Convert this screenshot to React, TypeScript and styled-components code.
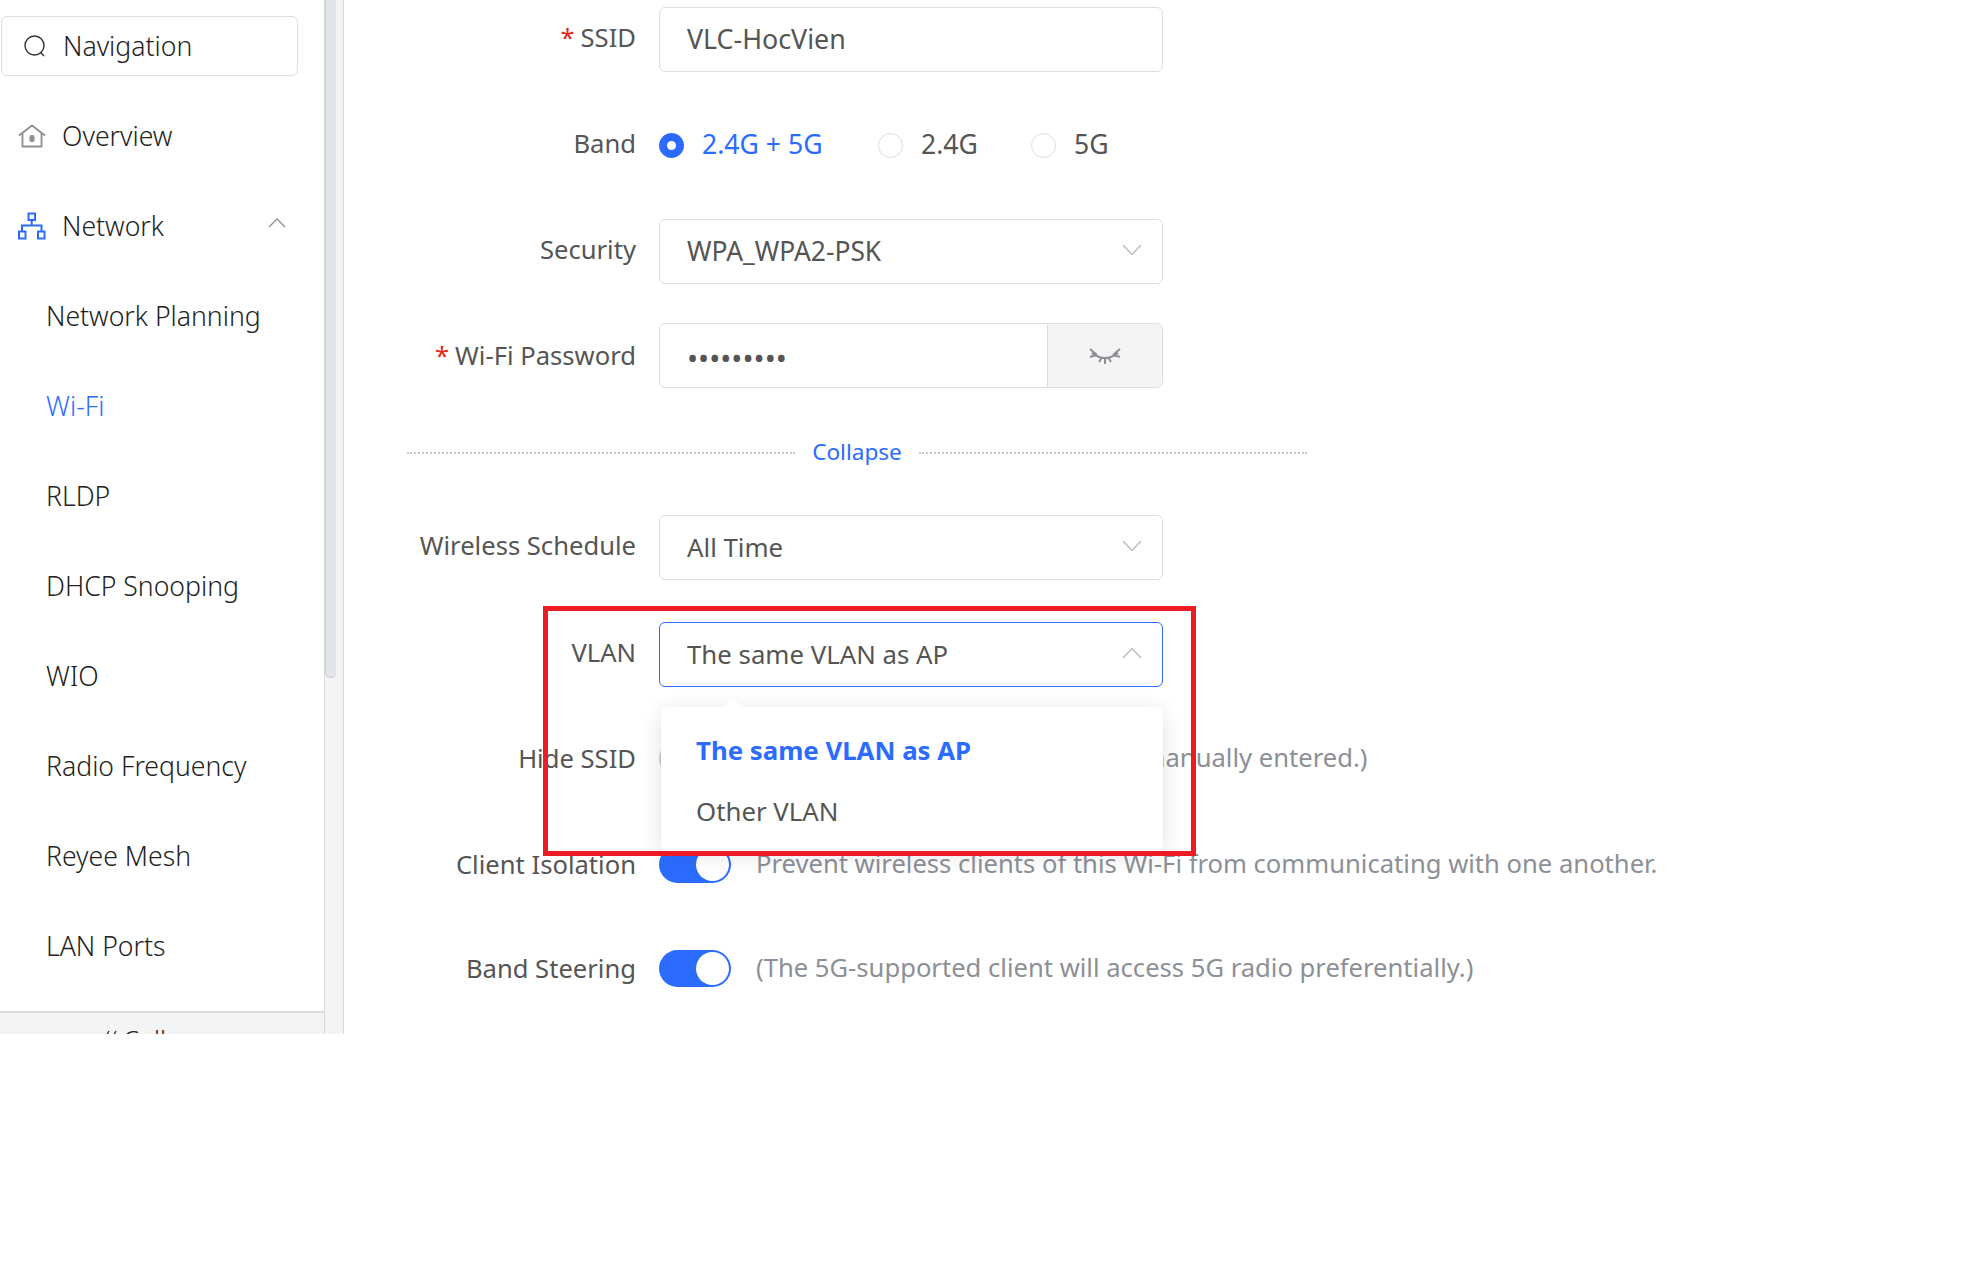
import styled, { createGlobalStyle } from 'styled-components';

const GlobalStyle = createGlobalStyle`
  html, body {
    margin: 0;
    padding: 0;
    background: #fff;
  }
  * {
    box-sizing: border-box;
  }
  body {
    font-family: "Noto Sans", "Open Sans", sans-serif;
  }
`;

const navItems = [
  'Network Planning',
  'Wi-Fi',
  'RLDP',
  'DHCP Snooping',
  'WIO',
  'Radio Frequency',
  'Reyee Mesh',
  'LAN Ports',
];

const Chevron = ({ up, color = '#b9bbbf' }: { up?: boolean; color?: string }) => (
  <svg width="20" height="12" viewBox="0 0 20 12" fill="none">
    <path d={up ? 'M1 11 L10 1.5 L19 11' : 'M1 1 L10 10.5 L19 1'} stroke={color} strokeWidth="1.3" />
  </svg>
);

const App = () => {
  return (
    <>
      <GlobalStyle />
      <Page>
        <Sidebar>
          <NavArea>
            <SearchBox>
              <svg width="24" height="24" viewBox="0 0 24 24" fill="none">
                <circle cx="11.5" cy="11.5" r="9.5" stroke="#333" strokeWidth="1.4" />
                <path d="M17.5 18.5 L21 22" stroke="#333" strokeWidth="1.4" />
              </svg>
              <span>Navigation</span>
            </SearchBox>
            <NavRow>
              <IconSlot>
                <svg width="28" height="24" viewBox="0 0 28 24" fill="none">
                  <path d="M1 11.5 L14 1.5 L27 11.5" stroke="#8f8f8f" strokeWidth="1.8" />
                  <path d="M4.5 9.5 V22.5 H23.5 V9.5" stroke="#8f8f8f" strokeWidth="1.8" />
                  <rect x="11.5" y="11" width="5" height="7" rx="2" fill="#8f8f8f" />
                </svg>
              </IconSlot>
              Overview
            </NavRow>
            <NavRow>
              <IconSlot>
                <svg width="28" height="28" viewBox="0 0 28 28" fill="none">
                  <rect x="10.5" y="1.5" width="6.5" height="6.5" stroke="#2b6cff" strokeWidth="2" />
                  <path d="M13.7 8 V13.5 M4 19 V13.5 H23.5 V19" stroke="#2b6cff" strokeWidth="2" />
                  <rect x="1" y="19.5" width="6.5" height="7" stroke="#2b6cff" strokeWidth="2" />
                  <rect x="20" y="19.5" width="6.5" height="7" stroke="#2b6cff" strokeWidth="2" />
                </svg>
              </IconSlot>
              Network
              <NavChevron>
                <svg width="18" height="10" viewBox="0 0 18 10" fill="none">
                  <path d="M1 9 L9 1 L17 9" stroke="#8f8f8f" strokeWidth="1.3" />
                </svg>
              </NavChevron>
            </NavRow>
            {navItems.map((item) => (
              <SubRow key={item} $active={item === 'Wi-Fi'}>
                {item}
              </SubRow>
            ))}
          </NavArea>
          <SideFooter>
            <svg width="14" height="20" viewBox="0 0 14 20" fill="none">
              <path d="M6 1 L1 10 L6 19 M13 1 L8 10 L13 19" stroke="#333" strokeWidth="1.4" />
            </svg>
            <span>Collapse</span>
          </SideFooter>
        </Sidebar>
        <ScrollTrack>
          <ScrollThumb />
        </ScrollTrack>
        <Content>
          <FormRow>
            <Label>
              <Req>*</Req>SSID
            </Label>
            <Field>
              <FieldText $size={26.8}>VLC-HocVien</FieldText>
            </Field>
          </FormRow>
          <FormRow>
            <Label>Band</Label>
            <RadioGroup>
              <RadioItem $active $width={219}>
                <RadioDot $active />
                2.4G + 5G
              </RadioItem>
              <RadioItem $width={153}>
                <RadioDot />
                2.4G
              </RadioItem>
              <RadioItem>
                <RadioDot />
                5G
              </RadioItem>
            </RadioGroup>
          </FormRow>
          <FormRow>
            <Label>Security</Label>
            <Field>
              <FieldText $size={26.4}>WPA_WPA2-PSK</FieldText>
              <Chevron />
            </Field>
          </FormRow>
          <FormRow $top={39}>
            <Label $flat>
              <Req>*</Req>Wi-Fi Password
            </Label>
            <Field>
              <PasswordDots>•••••••••</PasswordDots>
              <EyeAddon>
                <svg width="32" height="18" viewBox="0 0 32 18" fill="none">
                  <path
                    d="M3 6 Q16 16 29 6 M1 2 L8 8 M31 2 L24 8 M1 10 L7 8 M31 10 L25 8 M10 15 L12.5 11 M22 15 L19.5 11 M16 17 V12"
                    stroke="#8c8f96"
                    strokeWidth="2"
                  />
                </svg>
              </EyeAddon>
            </Field>
          </FormRow>
          <Divider>
            <DividerLine />
            <DividerText>Collapse</DividerText>
            <DividerLine />
          </Divider>
          <FormRow $top={31}>
            <Label>Wireless Schedule</Label>
            <Field>
              <FieldText>All Time</FieldText>
              <Chevron />
            </Field>
          </FormRow>
          <FormRow $top={42}>
            <Label>VLAN</Label>
            <Field $focused>
              <FieldText>The same VLAN as AP</FieldText>
              <Chevron up />
            </Field>
            <Dropdown>
              <DropItem $active>The same VLAN as AP</DropItem>
              <DropItem>Other VLAN</DropItem>
            </Dropdown>
          </FormRow>
          <FormRow $top={39}>
            <Label $flat>Hide SSID</Label>
            <Toggle />
            <Hint $gap={16}>(The SSID is hidden and must be manually entered.)</Hint>
          </FormRow>
          <FormRow>
            <Label $flat>Client Isolation</Label>
            <Toggle $on />
            <Hint>Prevent wireless clients of this Wi-Fi from communicating with one another.</Hint>
          </FormRow>
          <FormRow $top={39}>
            <Label $flat>Band Steering</Label>
            <Toggle $on />
            <Hint>(The 5G-supported client will access 5G radio preferentially.)</Hint>
          </FormRow>
        </Content>
        <RedBox />
      </Page>
    </>
  );
};

const Page = styled.div`
  position: relative;
  display: flex;
  height: 1034px;
  overflow: hidden;
`;

const Sidebar = styled.aside`
  width: 325px;
  flex: none;
  display: flex;
  flex-direction: column;
  border-right: 1px solid #d9d9d9;
`;

const NavArea = styled.nav`
  height: 1011px;
  flex: none;
  padding-top: 16px;
`;

const SearchBox = styled.div`
  width: 297px;
  height: 60px;
  margin-left: 1px;
  padding-left: 21px;
  display: flex;
  align-items: center;
  gap: 16px;
  border: 1px solid #dedede;
  border-radius: 6px;
  font-size: 26.6px;
  font-weight: 300;
  color: #222;
`;

const NavRow = styled.div`
  height: 90px;
  padding-left: 18px;
  display: flex;
  align-items: center;
  font-size: 26.6px;
  font-weight: 300;
  color: #222;
  &:nth-child(2) {
    margin-top: 15px;
  }
`;

const IconSlot = styled.span`
  width: 44px;
  display: flex;
  align-items: center;
`;

const NavChevron = styled.span`
  margin-left: auto;
  margin-right: 38px;
  display: flex;
  margin-top: -6px;
`;

const SubRow = styled.div<{ $active?: boolean }>`
  height: 90px;
  padding-left: 46px;
  display: flex;
  align-items: center;
  font-size: 26.6px;
  font-weight: 300;
  color: ${({ $active }) => ($active ? '#2b6cff' : '#222')};
`;

const SideFooter = styled.div`
  flex: 1;
  display: flex;
  align-items: flex-start;
  gap: 6px;
  background: #f4f4f4;
  border-top: 2px solid #dcdcdc;
  padding: 9px 0 0 103px;
  font-size: 25.6px;
  font-weight: 300;
  color: #222;
  white-space: nowrap;
  svg {
    margin-top: 8px;
    flex: none;
  }
`;

const ScrollTrack = styled.div`
  width: 19px;
  flex: none;
  background: #f4f4f4;
  border-right: 1px solid #d9d9d9;
`;

const ScrollThumb = styled.div`
  width: 11px;
  height: 678px;
  background: #e1e4e8;
  border-left: 1px solid #cdd0d2;
  border-bottom: 1px solid #cdd0d2;
  border-radius: 0 0 5px 5px;
`;

const Content = styled.main`
  flex: 1;
  padding-top: 7px;
`;

const FormRow = styled.div<{ $top?: number }>`
  position: relative;
  height: 65px;
  margin-top: ${({ $top }) => $top ?? 41}px;
  display: flex;
  align-items: center;
  &:first-child {
    margin-top: 0;
  }
`;

const Label = styled.div<{ $flat?: boolean }>`
  width: 292px;
  flex: none;
  margin-right: 23px;
  margin-bottom: ${({ $flat }) => ($flat ? '1px' : '5px')};
  text-align: right;
  font-size: 25.6px;
  color: #555;
  white-space: nowrap;
`;

const Req = styled.span`
  color: #e0291c;
  margin-right: 6px;
`;

const Field = styled.div<{ $focused?: boolean }>`
  width: 504px;
  height: 65px;
  padding-left: 27px;
  padding-right: 20px;
  display: flex;
  align-items: center;
  justify-content: space-between;
  border: 1.5px solid ${({ $focused }) => ($focused ? '#2b6cff' : '#dedede')};
  border-radius: 6px;
  background: #fff;
  position: relative;
  > svg {
    margin-bottom: 3px;
  }
`;

const FieldText = styled.span<{ $size?: number }>`
  margin-bottom: 2px;
  font-size: ${({ $size }) => $size ?? 25.8}px;
  color: #555;
`;

const PasswordDots = styled.span`
  margin-top: 3px;
  font-size: 29.5px;
  color: #555;
`;

const EyeAddon = styled.span`
  position: absolute;
  top: 0;
  right: 0;
  bottom: 0;
  width: 115px;
  display: flex;
  align-items: center;
  justify-content: center;
  background: #f4f4f4;
  border-left: 1.5px solid #dedede;
  border-radius: 0 6px 6px 0;
`;

const RadioGroup = styled.div`
  display: flex;
  align-items: center;
`;

const RadioItem = styled.label<{ $active?: boolean; $width?: number }>`
  width: ${({ $width }) => ($width ? `${$width}px` : 'auto')};
  margin-bottom: 4px;
  display: flex;
  align-items: center;
  gap: 18px;
  font-size: 26.6px;
  color: ${({ $active }) => ($active ? '#2b6cff' : '#555')};
`;

const RadioDot = styled.span<{ $active?: boolean }>`
  width: 25px;
  height: 25px;
  margin-top: 4px;
  border-radius: 50%;
  flex: none;
  background: #fff;
  border: ${({ $active }) => ($active ? '8.5px solid #2b6cff' : '1.5px solid #dedede')};
`;

const Divider = styled.div`
  width: 900px;
  height: 62px;
  margin: 34px 0 0 63px;
  display: flex;
  align-items: center;
`;

const DividerLine = styled.span`
  flex: 1;
  border-top: 2px dotted #c9c9c9;
`;

const DividerText = styled.span`
  padding: 0 17px 4px;
  font-size: 22.6px;
  color: #2b6cff;
`;

const Dropdown = styled.div`
  position: absolute;
  z-index: 2;
  top: 85px;
  left: 317px;
  width: 502px;
  height: 144px;
  padding-top: 12px;
  background: #fff;
  border-radius: 6px;
  box-shadow: 0 4px 20px rgba(40, 40, 70, 0.14);
  &::before {
    content: '';
    position: absolute;
    top: -9px;
    left: 63px;
    border-left: 9px solid transparent;
    border-right: 9px solid transparent;
    border-bottom: 9px solid #fff;
  }
`;

const DropItem = styled.div<{ $active?: boolean }>`
  height: 61px;
  padding-left: 35px;
  display: flex;
  align-items: center;
  font-size: 25.8px;
  font-weight: ${({ $active }) => ($active ? 700 : 400)};
  color: ${({ $active }) => ($active ? '#2b6cff' : '#555')};
`;

const Toggle = styled.span<{ $on?: boolean }>`
  position: relative;
  width: 72px;
  height: 37px;
  flex: none;
  border-radius: 19px;
  background: ${({ $on }) => ($on ? '#2b6cff' : '#cfcfcf')};
  &::after {
    content: '';
    position: absolute;
    top: 2px;
    left: ${({ $on }) => ($on ? '37px' : '2px')};
    width: 33px;
    height: 33px;
    border-radius: 50%;
    background: #fff;
  }
`;

const Hint = styled.span<{ $gap?: number }>`
  margin-left: ${({ $gap }) => $gap ?? 25}px;
  margin-bottom: 3px;
  font-size: 25.6px;
  color: #8c8f96;
  white-space: nowrap;
`;

const RedBox = styled.div`
  position: absolute;
  z-index: 3;
  left: 543px;
  top: 606px;
  width: 653px;
  height: 250px;
  border: 5px solid #ed1c24;
  pointer-events: none;
`;

export default App;
